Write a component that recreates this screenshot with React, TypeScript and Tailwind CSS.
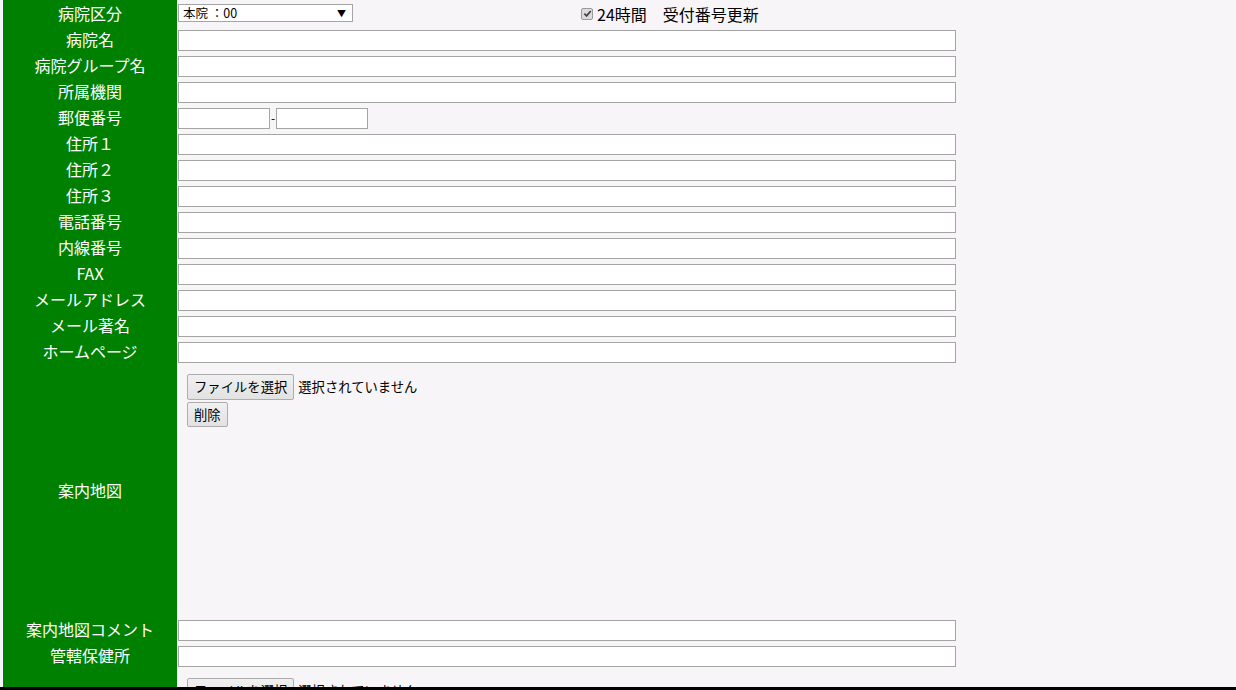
import React from "react";

const FONT = { fontFamily: '"Noto Sans CJK JP", "Noto Sans", sans-serif' };

function Label({ children }: { children?: React.ReactNode }) {
  return (
    <div className="ml-[3px] w-[174px] shrink-0 bg-[#008000] text-white text-[16px] leading-none pb-[2px] flex items-center justify-center">
      {children}
    </div>
  );
}

function TextInput({ w = "w-[778px]" }: { w?: string }) {
  return <div className={`${w} h-[21px] border border-[#a5a5a5] bg-white`} />;
}

function Row({ label, children }: { label: string; children?: React.ReactNode }) {
  return (
    <div className="flex h-[26px]">
      <Label>{label}</Label>
      <div className="pl-[1px] flex items-center">{children}</div>
    </div>
  );
}

function FileBlock({ withDelete }: { withDelete?: boolean }) {
  return (
    <div className="pl-[9px] pt-[9px] flex flex-col gap-[2px] text-[13.33px] text-black">
      <div className="flex items-center gap-[4px]">
        <button className="h-[26px] px-[6px] border border-[#adadad] rounded-[2px] bg-gradient-to-b from-[#f0f0f0] to-[#e2e2e2] text-[13.33px] leading-none">
          ファイルを選択
        </button>
        <span>選択されていません</span>
      </div>
      {withDelete && (
        <div>
          <button className="h-[25px] px-[6px] border border-[#adadad] rounded-[2px] bg-gradient-to-b from-[#f0f0f0] to-[#e2e2e2] text-[13.33px] leading-none">
            削除
          </button>
        </div>
      )}
    </div>
  );
}

export default function App() {
  const plain = ["病院名", "病院グループ名", "所属機関"];
  const after = [
    "住所１",
    "住所２",
    "住所３",
    "電話番号",
    "内線番号",
    "FAX",
    "メールアドレス",
    "メール著名",
    "ホームページ",
  ];
  return (
    <div className="w-[1236px] h-[690px] overflow-hidden bg-[#f7f5f7] relative" style={FONT}>
      <div className="flex flex-col">
        <div className="flex h-[27px]">
          <Label>病院区分</Label>
          <div className="pl-[1px] flex items-center">
            <div className="w-[175px] h-[18px] mt-[-1px] border border-[#a5a5a5] bg-white flex items-center justify-between pl-[4px] pr-[6px] text-[12.5px] leading-none text-black">
              <span>本院 ：00</span>
              <span className="text-[9px]">▼</span>
            </div>
            <div className="ml-[228px] flex items-center gap-[4px] text-[16px] text-black">
              <span className="w-[12px] h-[12px] rounded-[2px] border border-[#9a9a9a] bg-[#dcdcdc] flex items-center justify-center">
                <svg width="9" height="9" viewBox="0 0 10 10">
                  <path d="M1.5 5.2 L4 7.6 L8.6 2.2" fill="none" stroke="#444" strokeWidth="2" />
                </svg>
              </span>
              <span>24時間　受付番号更新</span>
            </div>
          </div>
        </div>
        {plain.map((l) => (
          <Row key={l} label={l}>
            <TextInput />
          </Row>
        ))}
        <Row label="郵便番号">
          <TextInput w="w-[92px]" />
          <span className="w-[6px] text-[12px] text-black leading-none flex justify-center">-</span>
          <TextInput w="w-[92px]" />
        </Row>
        {after.map((l) => (
          <Row key={l} label={l}>
            <TextInput />
          </Row>
        ))}
        <div className="flex h-[252px]">
          <Label>案内地図</Label>
          <div className="pl-[1px]">
            <FileBlock withDelete />
          </div>
        </div>
        <Row label="案内地図コメント">
          <TextInput />
        </Row>
        <Row label="管轄保健所">
          <TextInput />
        </Row>
        <div className="flex h-[252px]">
          <Label></Label>
          <div className="pl-[1px]">
            <FileBlock withDelete />
          </div>
        </div>
      </div>
      <div className="absolute left-0 right-0 bottom-0 h-[3px] bg-black" />
    </div>
  );
}
